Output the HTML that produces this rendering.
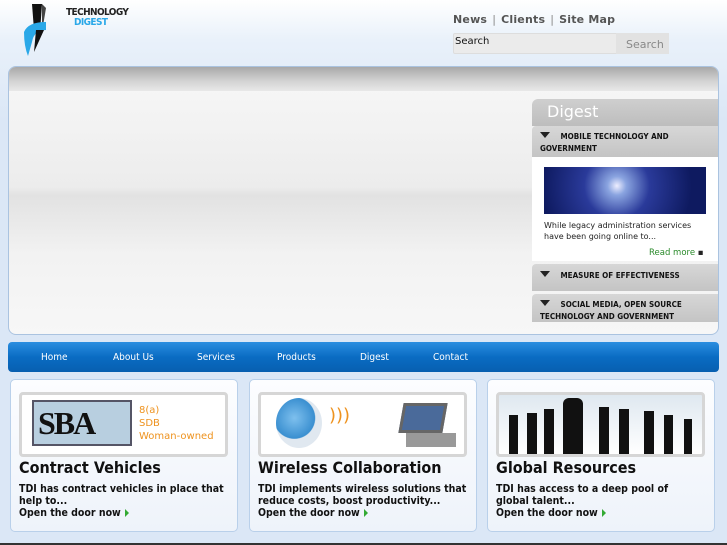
<!DOCTYPE html><html><head><style>
*{margin:0;padding:0;box-sizing:border-box}
body{width:727px;height:545px;overflow:hidden;background:linear-gradient(#fff 0,#e9f1fa 40px,#dbe7f6 120px,#dbe7f6);font-family:"DejaVu Sans","Liberation Sans",sans-serif;position:relative}
.a{position:absolute}
.topl{font-size:11px;color:#555;font-weight:bold;top:13px;left:453px;letter-spacing:.2px}
.topl span{color:#888;font-weight:normal;margin:0 5px}
.main{left:8px;top:66px;width:711px;height:269px;border-radius:8px;border:1px solid #aac3e0;overflow:hidden;background:linear-gradient(#f8f8f8,#ececec 45%,#e2e2e2 48%,#f2f2f2 70%,#f7f7f7)}
.main .strip{height:24px;background:linear-gradient(#a9a9a9,#d4d4d4 60%,#e8e8e8)}
.side{left:532px;top:99px;width:186px}
.hd{background:linear-gradient(#d7d7d7,#c4c4c4);font-size:8px;font-weight:bold;color:#111;padding:5px 6px 2px 8px;line-height:12px;border-radius:4px 0 0 0;margin-bottom:3px;font-family:"DejaVu Sans Condensed","DejaVu Sans",sans-serif}
.tri{display:inline-block;width:0;height:0;border-left:5px solid transparent;border-right:5px solid transparent;border-top:6px solid #222;margin-right:8px;vertical-align:1px}
.nav{left:8px;top:342px;width:711px;height:30px;border-radius:4px;background:linear-gradient(#2b8ee0,#0a6cc3 50%,#075fb0)}
.nav span{position:absolute;top:10px;font-size:10px;color:#fff;font-family:"DejaVu Sans Condensed","DejaVu Sans",sans-serif}
.card{top:379px;width:228px;height:153px;border:1px solid #b9d0ea;border-radius:5px;background:linear-gradient(#fcfdff,#eef3fa)}
.img{position:absolute;left:8px;top:12px;width:209px;height:65px;border:3px solid #d6d6d6;border-radius:4px;background:#fff;overflow:hidden}
.card h2{position:absolute;left:8px;top:78px;font-size:16px;color:#111;font-weight:bold;font-family:"DejaVu Sans Condensed","DejaVu Sans",sans-serif;letter-spacing:0}
.card p{position:absolute;left:8px;top:103px;font-size:10.5px;line-height:12px;color:#111;width:218px;font-family:"DejaVu Sans Condensed","DejaVu Sans",sans-serif;font-weight:bold}
.card b{color:#111}
.gt{display:inline-block;border-left:4px solid #3a3;border-top:4px solid transparent;border-bottom:4px solid transparent;margin-left:4px;vertical-align:-1px}
</style></head><body>
<svg class="a" style="left:22px;top:2px" width="40" height="56"><path d="M10 2 L20 2 L18 30 L12 28Z" fill="#111"/><path d="M20 2 L24 6 L20 30Z" fill="#444"/><path d="M2 30 Q6 20 24 20 L24 28 Q12 28 10 40 L6 54 Q2 44 2 30Z" fill="#2aa8e8"/><path d="M14 28 L22 28 L12 50Z" fill="#111"/></svg>
<div class="a" style="left:66px;top:7px;font-size:10px;font-weight:bold;color:#222;letter-spacing:-.6px;font-family:'DejaVu Sans Condensed',sans-serif">TECHNOLOGY</div>
<div class="a" style="left:74px;top:17px;font-size:10px;font-weight:bold;color:#2aa8e8;letter-spacing:-.6px;font-family:'DejaVu Sans Condensed',sans-serif">DIGEST</div>
<div class="a topl">News<span>|</span>Clients<span>|</span>Site Map</div>
<div class="a" style="left:453px;top:33px;width:216px;height:21px;background:#ebebeb;border:1px solid #ddd;border-radius:2px"></div>
<div class="a" style="left:455px;top:36px;font-size:10px;color:#111">Search</div>
<div class="a" style="left:616px;top:33px;width:53px;height:21px;background:#e2e2e2"></div>
<div class="a" style="left:626px;top:38px;font-size:11px;color:#888">Search</div>
<div class="a main"><div class="strip"></div></div>
<div class="a side">
<div style="background:linear-gradient(#cfcfcf,#bdbdbd);height:27px;border-radius:6px 0 0 0;color:#fff;font-size:16px;padding:3px 0 0 15px;margin-bottom:0">Digest</div>
<div class="hd" style="margin-bottom:0"><span class="tri"></span>&nbsp;MOBILE TECHNOLOGY AND GOVERNMENT</div>
<div style="background:#fff;height:104px;position:relative">
<div class="a" style="left:12px;top:10px;width:162px;height:47px;background:radial-gradient(circle at 45% 40%,#eef 0,#8aa4e0 10%,#2a3a9a 35%,#0e1a60 80%)"></div>
<div class="a" style="left:12px;top:63px;font-size:8px;line-height:11px;color:#222">While legacy administration services<br>have been going online to...</div>
<div class="a" style="left:117px;top:91px;font-size:8.5px;color:#2a8a2a">Read more <span style="color:#222">▪</span></div>
</div>
<div class="hd" style="margin-top:3px;height:27px;padding-top:6px"><span class="tri"></span>&nbsp;MEASURE OF EFFECTIVENESS</div>
<div class="hd" style="height:28px"><span class="tri"></span>&nbsp;SOCIAL MEDIA, OPEN SOURCE TECHNOLOGY AND GOVERNMENT</div>
</div>
<div class="a nav"><span style="left:33px">Home</span><span style="left:105px">About Us</span><span style="left:189px">Services</span><span style="left:269px">Products</span><span style="left:352px">Digest</span><span style="left:425px">Contact</span></div>
<div class="a card" style="left:10px"><div class="img"><div class="a" style="left:10px;top:5px;width:100px;height:46px;background:#b8cfe0;border:2px solid #556"></div><div class="a" style="left:16px;top:10px;font-family:'Liberation Serif',serif;font-weight:bold;font-size:32px;color:#111;letter-spacing:-2px">SBA</div><div class="a" style="left:117px;top:9px;font-size:10px;line-height:13px;color:#ee9320">8(a)<br>SDB<br>Woman-owned</div></div><h2>Contract Vehicles</h2><p>TDI has contract vehicles in place that help to...<br><b>Open the door now</b><span class="gt"></span></p></div>
<div class="a card" style="left:249px"><div class="img"><div class="a" style="left:15px;top:3px;width:46px;height:50px;border-radius:50%;background:radial-gradient(circle at 40% 40%,#7ec0ee,#3a8fd0 50%,#e0e8f0 52%)"></div><div class="a" style="left:68px;top:10px;color:#ee9320;font-size:18px">)))</div><div class="a" style="left:140px;top:8px;width:44px;height:30px;background:#4a6a9a;border:3px solid #666;transform:skewX(-10deg)"></div><div class="a" style="left:145px;top:38px;width:50px;height:14px;background:#999"></div></div><h2>Wireless Collaboration</h2><p>TDI implements wireless solutions that reduce costs, boost productivity...<br><b>Open the door now</b><span class="gt"></span></p></div>
<div class="a card" style="left:487px"><div class="img" style="background:linear-gradient(#dfe8f0,#fff)"><svg width="209" height="65"><g fill="#111"><rect x="10" y="20" width="9" height="45"/><rect x="28" y="18" width="10" height="47"/><rect x="45" y="14" width="10" height="51"/><rect x="64" y="3" width="20" height="62" rx="6"/><rect x="100" y="12" width="10" height="53"/><rect x="120" y="14" width="10" height="51"/><rect x="145" y="16" width="10" height="49"/><rect x="165" y="20" width="9" height="45"/><rect x="185" y="24" width="8" height="41"/></g></svg></div><h2>Global Resources</h2><p style="width:190px">TDI has access to a deep pool of global talent...<br><b>Open the door now</b><span class="gt"></span></p></div>
<div class="a" style="left:0;top:543px;width:727px;height:2px;background:#333"></div>
</body></html>
